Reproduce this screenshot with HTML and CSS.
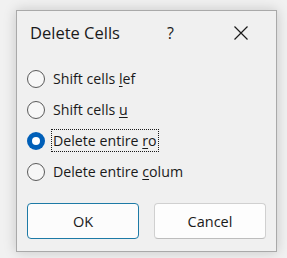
FILE: index.html
```html
<!DOCTYPE html>
<html>
<head>
<meta charset="utf-8">
<link rel="stylesheet" href="styles.css">
</head>
<body>
<div class="dialog">
  <div class="titlebar">
    <span class="title">Delete Cells</span>
    <span class="help">?</span>
    <svg class="close" width="14" height="14" viewBox="0 0 14 14"><path d="M0.5 0.5 L13.5 13.5 M13.5 0.5 L0.5 13.5" stroke="#1a1a1a" stroke-width="1.2" fill="none"/></svg>
  </div>
  <div class="options">
    <div class="row"><span class="radio"></span><span class="label">Shift cells <u>l</u>ef</span></div>
    <div class="row"><span class="radio"></span><span class="label">Shift cells <u>u</u></span></div>
    <div class="row"><span class="radio checked"></span><span class="label focus">Delete entire <u>r</u>o</span></div>
    <div class="row"><span class="radio"></span><span class="label">Delete entire <u>c</u>olum</span></div>
  </div>
  <div class="buttons">
    <button class="btn primary">OK</button>
    <button class="btn">Cancel</button>
  </div>
</div>
</body>
</html>
```
FILE: styles.css
```css
html, body {
  margin: 0;
  padding: 0;
}
body {
  width: 287px;
  height: 258px;
  background: #f1f1f1;
  font-family: "Open Sans", "Noto Sans", sans-serif;
  color: #1a1a1a;
  overflow: hidden;
}
.dialog {
  margin: 10px 0 0 16px;
  width: 259px;
  height: 240px;
  border: 1px solid #a9a9a9;
  background: #f0f0f0;
  box-shadow: 0 0 12px rgba(0,0,0,0.18);
  display: flex;
  flex-direction: column;
}
.titlebar {
  height: 43px;
  display: flex;
  align-items: center;
  padding-left: 13px;
}
.title {
  font-size: 16.5px;
  width: 137px;
}
.help {
  font-size: 16px;
  width: 67px;
}
.close {
  display: block;
}
.options {
  padding: 9px 0 0 10px;
  display: flex;
  flex-direction: column;
}
.row {
  height: 31px;
  display: flex;
  align-items: center;
}
.radio {
  box-sizing: border-box;
  width: 18px;
  height: 18px;
  border-radius: 50%;
  border: 1px solid #5a5a5a;
  background: #f7f7f7;
  margin-right: 6px;
  flex: none;
}
.radio.checked {
  border: none;
  background: #005fb8;
  position: relative;
}
.radio.checked::after {
  content: "";
  position: absolute;
  left: 5px;
  top: 5px;
  width: 8px;
  height: 8px;
  border-radius: 50%;
  background: #ffffff;
}
.label {
  font-size: 14.2px;
  padding: 1px 1px;
  border: 1px dotted transparent;
  line-height: 19px;
}
.label.focus {
  border-color: #1a1a1a;
}
u {
  text-decoration-thickness: 1px;
  text-underline-offset: 2px;
}
.buttons {
  margin-top: 16px;
  padding-left: 10px;
  display: flex;
  gap: 15px;
}
.btn {
  box-sizing: border-box;
  width: 112px;
  height: 36px;
  border: 1px solid #d0d0d0;
  border-bottom-color: #bdbdbd;
  border-radius: 4px;
  background: #fdfdfd;
  font-family: "Open Sans", "Noto Sans", sans-serif;
  font-size: 14.5px;
  color: #1a1a1a;
  padding: 0;
}
.btn.primary {
  border: 1px solid #1d7aa6;
  background: #fcfcfc;
}
```
